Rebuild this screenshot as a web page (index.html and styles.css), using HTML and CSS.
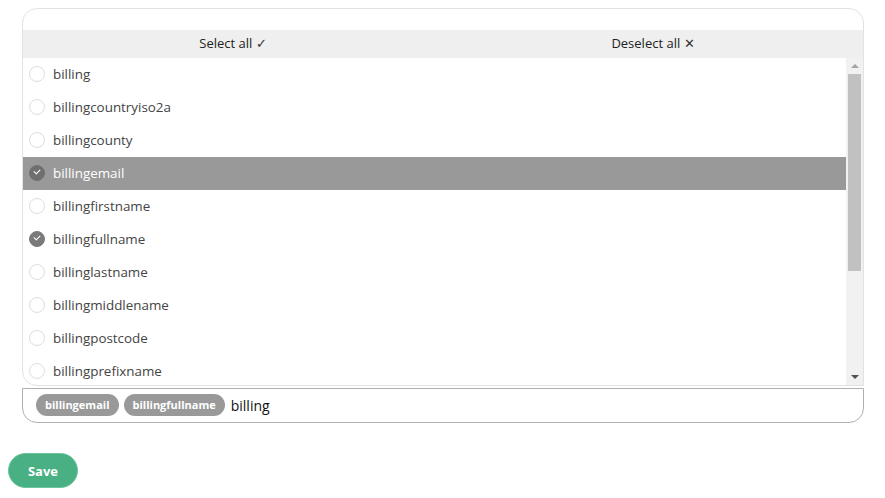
FILE: index.html
```html
<!DOCTYPE html>
<html lang="en">
<head>
    <meta charset="UTF-8">
    <title>Field picker</title>
    <link rel="stylesheet" href="styles.css">
</head>
<body>
    <div class="picker">
        <div class="dropdown">
            <div class="dropdown-top"></div>
            <div class="bulk-bar">
                <button class="bulk-btn">Select all <span class="glyph">&#10003;</span></button>
                <button class="bulk-btn">Deselect all <span class="glyph">&#10005;</span></button>
            </div>
            <div class="list-wrap">
                <ul class="options">
                    <li class="option"><span class="radio"></span>billing</li>
                    <li class="option"><span class="radio"></span>billingcountryiso2a</li>
                    <li class="option"><span class="radio"></span>billingcounty</li>
                    <li class="option active"><span class="radio checked"></span>billingemail</li>
                    <li class="option"><span class="radio"></span>billingfirstname</li>
                    <li class="option"><span class="radio checked"></span>billingfullname</li>
                    <li class="option"><span class="radio"></span>billinglastname</li>
                    <li class="option"><span class="radio"></span>billingmiddlename</li>
                    <li class="option"><span class="radio"></span>billingpostcode</li>
                    <li class="option"><span class="radio"></span>billingprefixname</li>
                </ul>
                <div class="scrollbar">
                    <span class="arrow up"></span>
                    <div class="track"><div class="thumb"></div></div>
                    <span class="arrow down"></span>
                </div>
            </div>
        </div>
        <div class="input-box">
            <span class="chip">billingemail</span>
            <span class="chip">billingfullname</span>
            <span class="query">billing</span>
        </div>
    </div>
    <button class="save-btn">Save</button>
</body>
</html>
```

FILE: styles.css
```css
body {
    margin: 8px;
    font-family: "Open Sans", "Noto Sans", Arial, sans-serif;
    color: #444;
    background: #fff;
}
.picker {
    margin: 0 13px 0 14px;
}
.dropdown {
    border: 1px solid #e2e2e2;
    border-radius: 15px 15px 0 15px;
    overflow: hidden;
    background: #fff;
}
.dropdown-top {
    height: 21px;
}
.bulk-bar {
    display: flex;
    height: 28px;
    background: #efefef;
}
.bulk-btn {
    flex: 1;
    border: none;
    background: none;
    font-family: inherit;
    font-size: 13px;
    color: #222;
    padding: 0 0 2px;
}
.glyph {
    font-size: 13px;
    font-weight: 300;
    color: #333;
}
.list-wrap {
    display: flex;
    height: 327px;
    overflow: hidden;
}
.options {
    flex: 1;
    list-style: none;
    margin: 0;
    padding: 0;
}
.option {
    display: flex;
    align-items: center;
    gap: 8px;
    height: 33px;
    box-sizing: border-box;
    padding: 0 0 2px 6px;
    font-size: 13.4px;
    color: #444;
}
.option.active {
    background: #999;
    color: #fff;
}
.radio {
    position: relative;
    width: 16px;
    height: 16px;
    box-sizing: border-box;
    border: 1px solid #ddd;
    border-radius: 50%;
    background: #fff;
}
.radio.checked {
    border-color: #7a7a7a;
    background: #7a7a7a;
}
.option.active .radio.checked {
    border-color: #6f6f6f;
    background: #6f6f6f;
}
.radio.checked::after {
    content: "";
    position: absolute;
    left: 4px;
    top: 3px;
    width: 5px;
    height: 3px;
    border-left: 1.5px solid #fff;
    border-bottom: 1.5px solid #fff;
    transform: rotate(-45deg);
}
.scrollbar {
    width: 17px;
    display: flex;
    flex-direction: column;
    align-items: center;
    background: #f1f1f1;
}
.track {
    flex: 1;
    width: 100%;
    padding: 0 2px;
    box-sizing: border-box;
}
.thumb {
    height: 197px;
    background: #c1c1c1;
}
.arrow {
    width: 0;
    height: 0;
    margin: 6px 0;
    border-left: 4px solid transparent;
    border-right: 4px solid transparent;
}
.arrow.up {
    border-bottom: 4px solid #a3a3a3;
}
.arrow.down {
    border-top: 4px solid #505050;
}
.input-box {
    display: flex;
    align-items: center;
    gap: 5px;
    height: 35px;
    box-sizing: border-box;
    margin-top: 2px;
    padding: 0 13px 1px;
    border: 1px solid #b0b0b0;
    border-radius: 0 0 15px 15px;
}
.chip {
    height: 22px;
    line-height: 22px;
    padding: 0 9px;
    border-radius: 11px;
    background: #999;
    color: #fff;
    font-size: 11px;
    font-weight: 700;
}
.query {
    margin-left: 1px;
    font-size: 14px;
    color: #111;
}
.save-btn {
    margin-top: 30px;
    width: 70px;
    height: 35px;
    border: 1px solid #6cc49c;
    border-radius: 18px;
    background: #48b083;
    color: #fff;
    font-family: inherit;
    font-size: 13px;
    font-weight: 700;
}
```
